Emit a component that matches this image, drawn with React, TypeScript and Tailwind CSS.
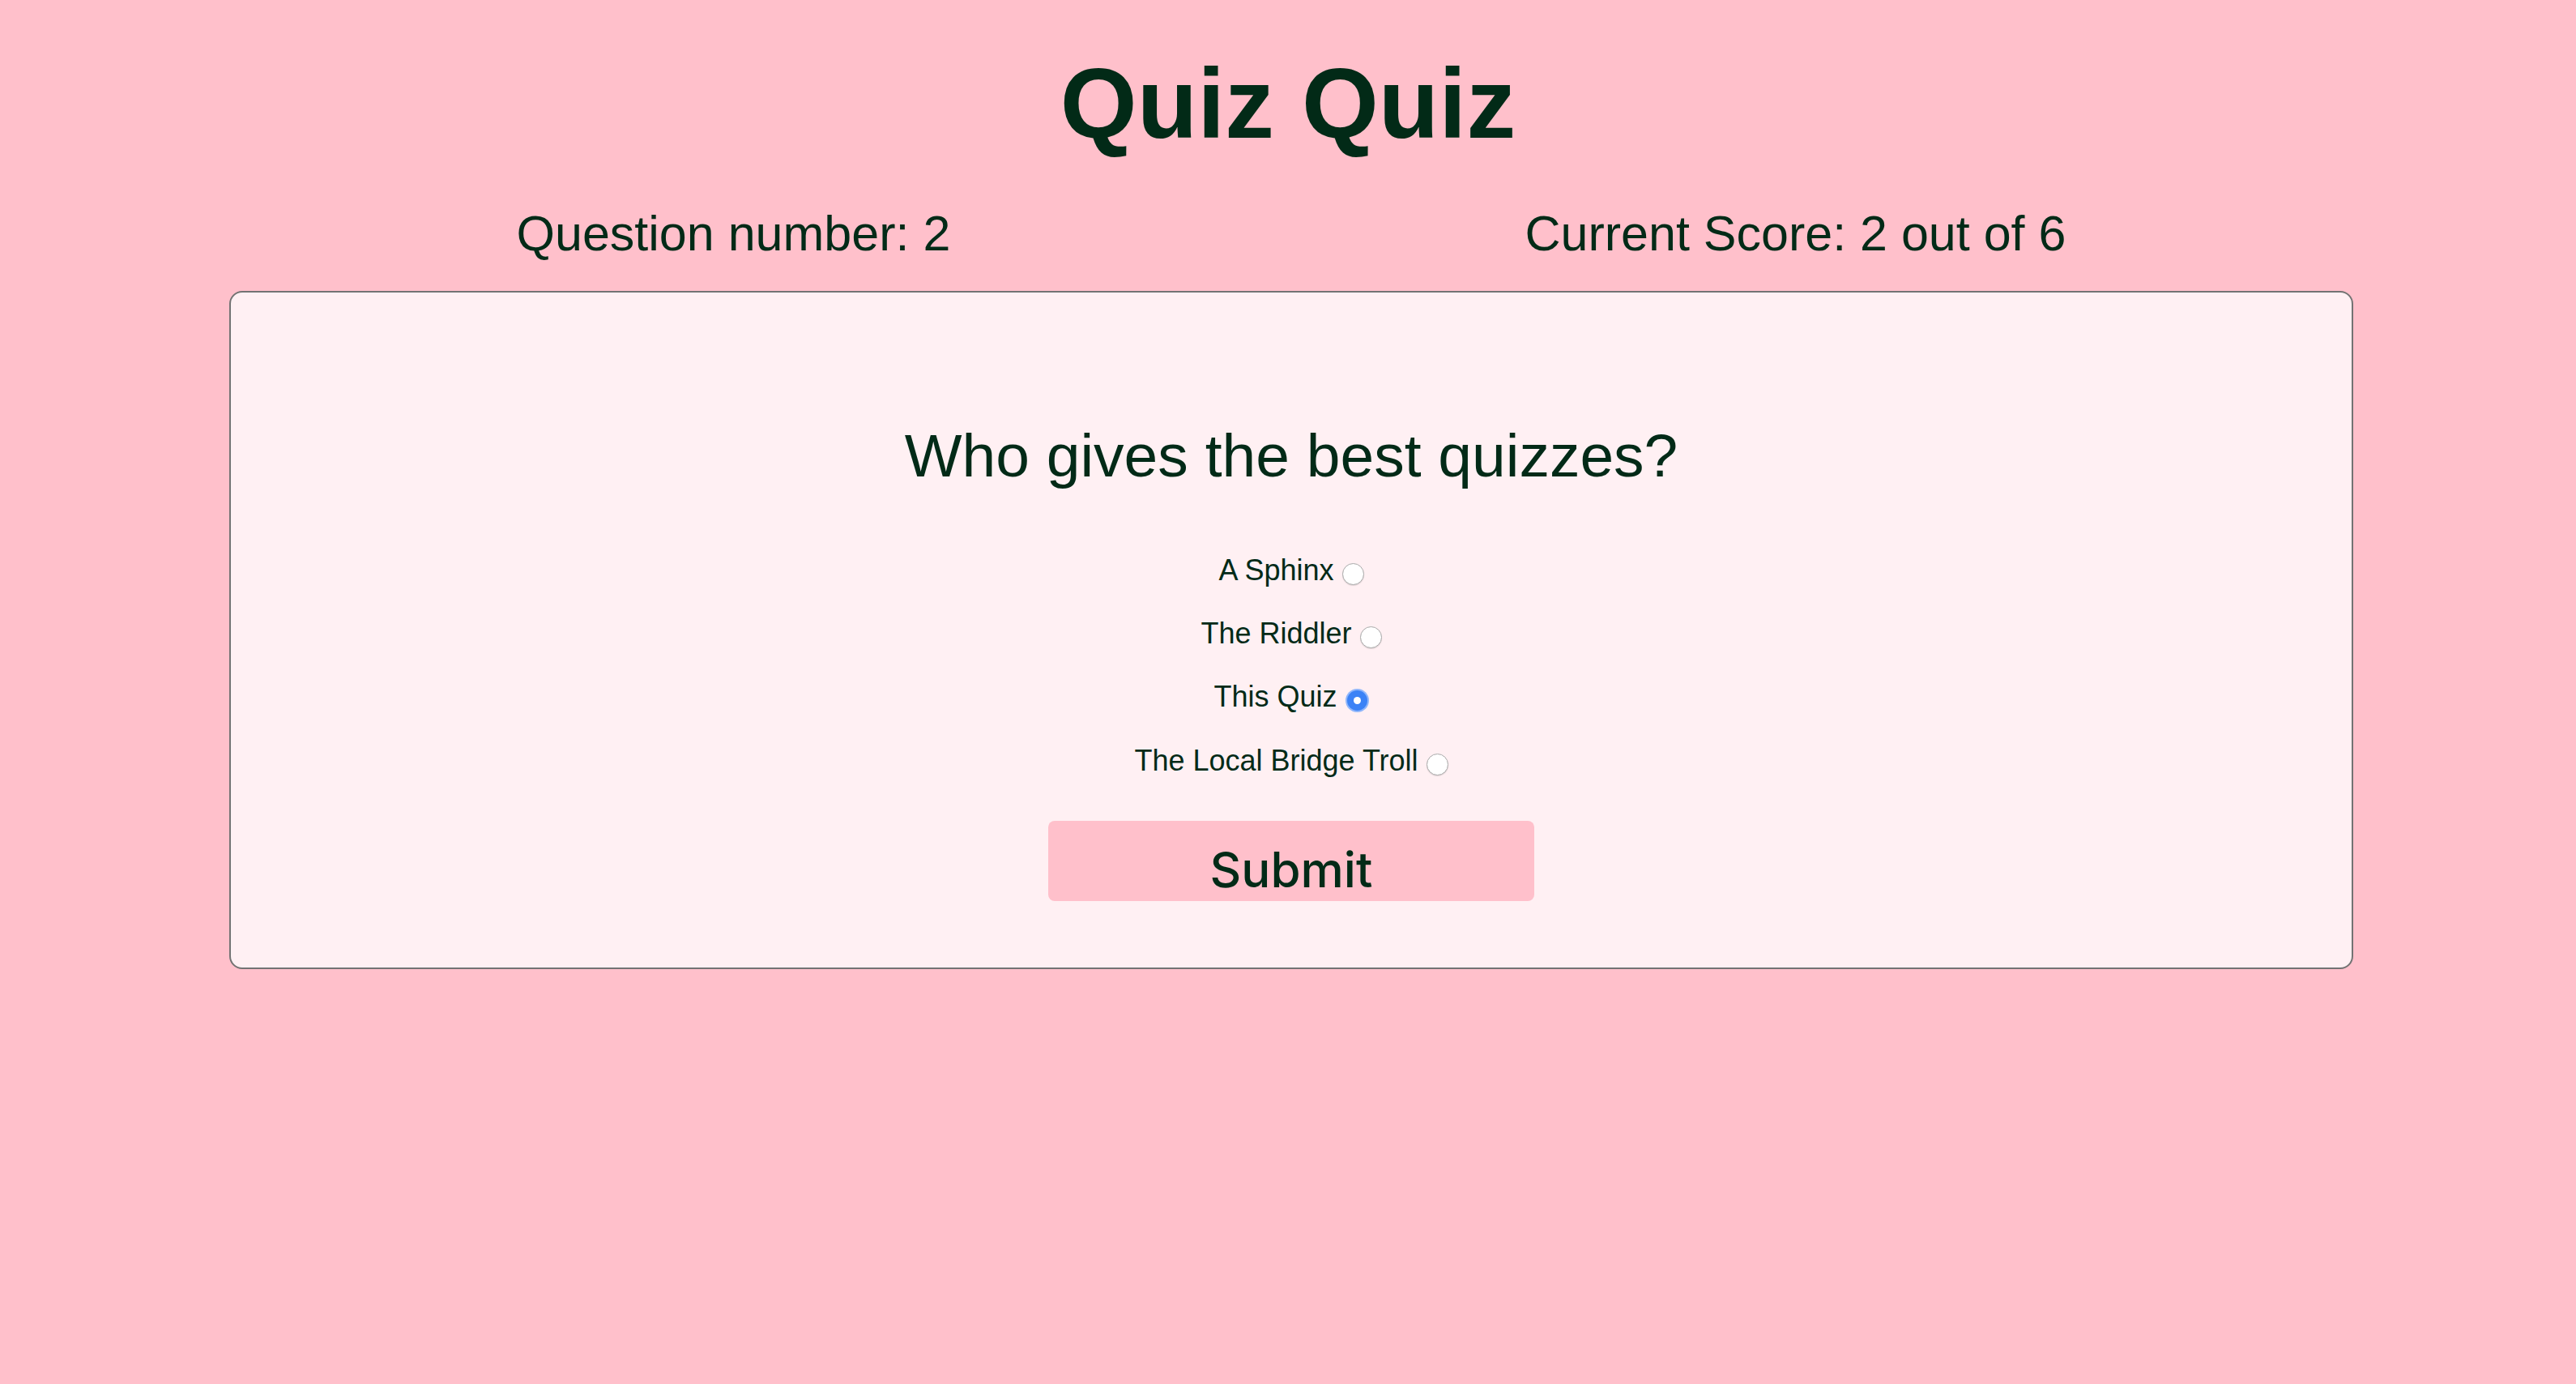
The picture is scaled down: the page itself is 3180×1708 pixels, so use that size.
import { useState } from "react";

const options = ["A Sphinx", "The Riddler", "This Quiz", "The Local Bridge Troll"];

function Radio({ checked }: { checked: boolean }) {
  if (checked) {
    return (
      <span className="ml-[10px] mt-[9px] flex h-[29px] w-[29px] shrink-0 items-center justify-center rounded-full bg-[#8fb6fb]">
        <span className="flex h-[25px] w-[25px] items-center justify-center rounded-full bg-[#3b82f6]">
          <span className="h-[9px] w-[9px] rounded-full bg-white" />
        </span>
      </span>
    );
  }
  return (
    <span className="ml-[10px] mt-[9px] h-[27px] w-[27px] shrink-0 rounded-full border-[1.5px] border-[#a9a9a9] bg-white shadow-[0_1px_1px_rgba(0,0,0,0.12)]" />
  );
}

export default function App() {
  const [selected, setSelected] = useState(2);

  return (
    <div className="min-h-[1708px] w-full bg-[#ffc0cb] text-[#022a17]" style={{ fontFamily: '"Liberation Sans", Arial, sans-serif' }}>
      <h1 className="pt-[67px] text-center text-[122px] font-bold leading-none">Quiz Quiz</h1>

      <div className="ml-[283px] mt-[69px] flex w-[2622px] justify-around text-[61px] leading-none">
        <span>Question number: 2</span>
        <span>Current Score: 2 out of 6</span>
      </div>

      <div className="ml-[283px] mt-[40px] flex w-[2622px] flex-col items-center rounded-[16px] border-2 border-[#737373] bg-[#fff0f3] pt-[164px] pb-[82px]">
        <h2 className="text-[75px] leading-none">Who gives the best quizzes?</h2>

        <div className="mt-[86px] flex flex-col items-center gap-[41.5px]">
          {options.map((opt, i) => (
            <label key={opt} className="flex cursor-pointer items-center text-[36px] leading-[36px]" onClick={() => setSelected(i)}>
              <span>{opt}</span>
              <Radio checked={selected === i} />
            </label>
          ))}
        </div>

        <button
          className="mt-[56px] flex h-[99px] w-[600px] items-start justify-center rounded-[8px] bg-[#ffc0cb] pt-[30px] text-[60px] font-medium leading-none text-[#022a17]"
          style={{ fontFamily: "Inter, sans-serif" }}
        >
          Submit
        </button>
      </div>
    </div>
  );
}
